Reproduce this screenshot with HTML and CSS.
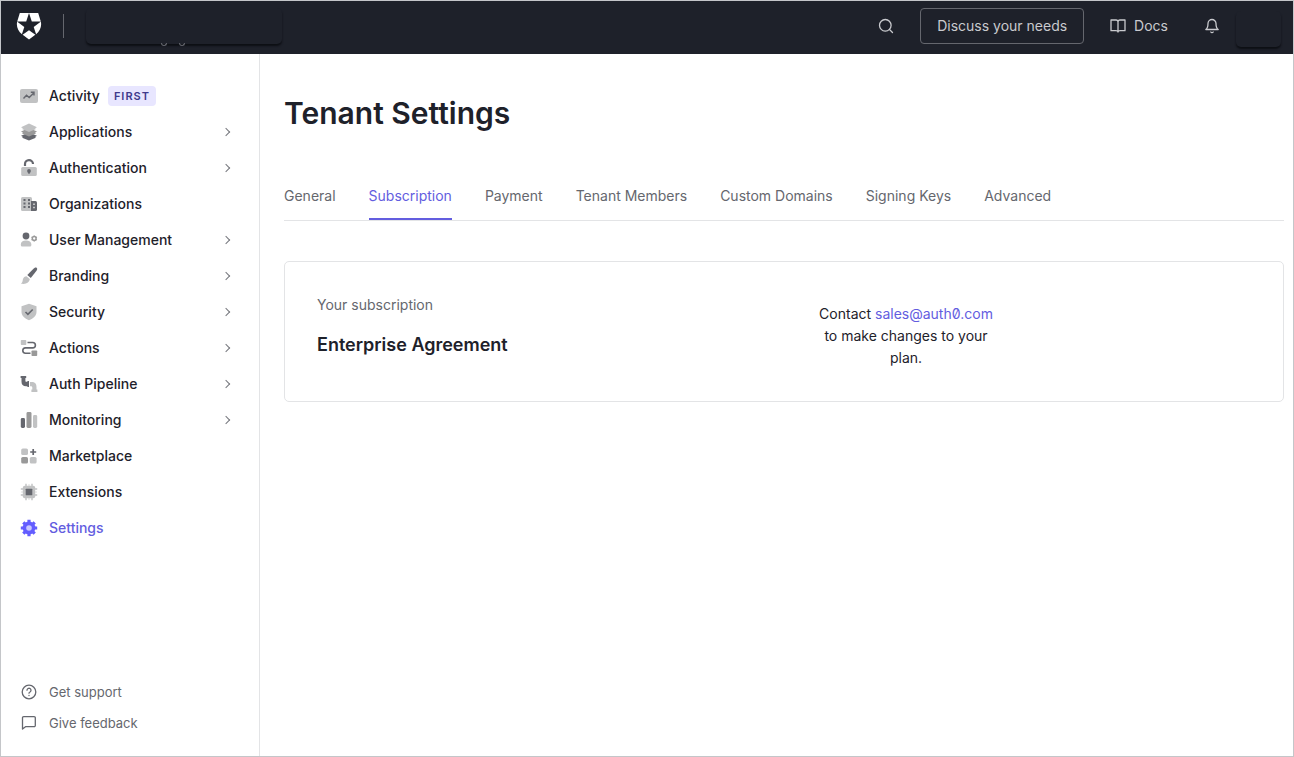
FILE: index.html
```html
<!DOCTYPE html>
<html lang="en">
<head>
<meta charset="utf-8">
<meta name="viewport" content="width=device-width, initial-scale=1">
<title>Tenant Settings</title>
<link rel="stylesheet" href="styles.css">
</head>
<body>
<div class="app">
  <header class="topbar">
    <a class="logo" href="#" aria-label="Home">
      <svg width="26" height="28" viewBox="0 0 26 28"><path fill="#fff" d="M3.8 1h18.4l2.5 8.2c1.4 4.800-.6 10.200-4.700 13L13 27.500l-7-5.300C1.900 19.400-.1 14 1.300 9.200z"/><path fill="#1e212a" d="M13 1l2.800 8.500h9.200l-7.300 5.400 2.800 8.600L13 18.200l-7.500 5.300 2.800-8.600L1 9.500h9.200z"/></svg>
    </a>
    <span class="divider"></span>
    <button class="tenant" type="button" aria-label="Switch tenant"><span class="hook"></span><span class="hook"></span></button>
    <div class="actions">
      <button class="icon-btn" type="button" aria-label="Search"><svg class="line" width="16" height="16" viewBox="0 0 16 16"><circle cx="7.300" cy="7.300" r="5.800"/><path d="M11.500 11.500l3 3"/></svg></button>
      <button class="discuss" type="button">Discuss your needs</button>
      <a class="docs" href="#"><svg class="line" width="16" height="16" viewBox="0 0 16 16"><path d="M8 4v10M8 4c0-1.200-.8-2-2-2H1v10.700h5c1.200 0 2 .4 2 1.300 0-.9.800-1.300 2-1.300h5V2h-5c-1.200 0-2 .8-2 2z"/></svg>Docs</a>
      <button class="icon-btn" type="button" aria-label="Notifications"><svg class="line" width="16" height="16" viewBox="0 0 16 16"><path d="M12 5.500a4 4 0 0 0-8 0c0 4.500-2.200 6-2.200 6h12.400S12 10 12 5.500M9.200 14a1.400 1.400 0 0 1-2.400 0"/></svg></button>
      <button class="account" type="button" aria-label="Account"></button>
    </div>
  </header>
  <div class="body">
    <aside class="sidebar">
      <nav class="nav">
        <a class="item" href="#"><svg width="18" height="18" viewBox="0 0 18 18"><rect y="2" width="18" height="14" rx="2" fill="#c1c2c3"/><path d="M3.500 11.500l3-3.300 2.700 2.400 4.800-4.800M10.800 5.300H14v3.200" fill="none" stroke="#65676e" stroke-width="1.400"/></svg><span>Activity</span><span class="badge">FIRST</span></a>
        <a class="item" href="#"><svg width="18" height="18" viewBox="0 0 18 18"><path d="M9 9.500l8 3.300-2 1.200.9.700L9 17.500l-6.900-2.800.9-.7-2-1.200z" fill="#65676e"/><path d="M9 5l8 3.600-2 1.100 1 .7-7 3.100-7-3.100 1-.7-2-1.100z" fill="#999"/><path d="M9 .6l8 3.600-2 1.100 1 .8-7 3-7-3 1-.8-2-1.100z" fill="#c1c2c3"/></svg><span>Applications</span><i class="chev"></i></a>
        <a class="item" href="#"><svg width="18" height="18" viewBox="0 0 18 18"><path d="M5 7V5.200a4 4 0 0 1 8-.2" fill="none" stroke="#65676e" stroke-width="2.200"/><rect x="1.200" y="8" width="15.600" height="9" rx="1.500" fill="#c1c2c3"/><circle cx="9" cy="12" r="1.900" fill="#65676e"/><path d="M9 12v2.700" stroke="#65676e" stroke-width="1.500"/></svg><span>Authentication</span><i class="chev"></i></a>
        <a class="item" href="#"><svg width="18" height="18" viewBox="0 0 18 18"><rect x="1" y="2" width="11" height="14" rx="1.500" fill="#c1c2c3"/><path d="M3.500 5h2M8 5h2M3.500 8.500h2M8 8.500h2M3.500 12h2M8 12h2" stroke="#65676e" stroke-width="1.800"/><path d="M11 6h4.500A1.500 1.500 0 0 1 17 7.500v7a1.500 1.500 0 0 1-1.500 1.500H11z" fill="#65676e"/><path d="M13 9.200h2M13 12.500h2" stroke="#c1c2c3" stroke-width="1.500"/></svg><span>Organizations</span></a>
        <a class="item" href="#"><svg width="18" height="18" viewBox="0 0 18 18"><circle cx="6" cy="5" r="3.400" fill="#65676e"/><path d="M.8 13.500C.8 11 2.800 9.600 6 9.600s5.400 1.400 5.400 3.900c0 1.600-.6 2-1.400 2H2.200c-.8 0-1.400-.4-1.400-2z" fill="#c1c2c3"/><circle cx="14.200" cy="7.500" r="1.900" fill="none" stroke="#999" stroke-width="1.500"/><path d="M14.200 4.400v1M14.200 9.600v1M11.500 5.900l.9.500M16 8.600l.9.500M11.500 9.100l.9-.5M16 6.400l.9-.5" stroke="#999" stroke-width="1.200"/></svg><span>User Management</span><i class="chev"></i></a>
        <a class="item" href="#"><svg width="18" height="18" viewBox="0 0 18 18"><path d="M16.600.8c1 .8.700 1.800-.3 3.200L10.800 11 7.300 8.100 13 2.200C14.500.7 15.700.1 16.600.8z" fill="#65676e"/><path d="M6.400 9.200l3.400 2.900c-.3 3.200-3.700 5.700-9 4.500 2-1 1.600-2.200 2.100-4.300.5-1.900 2-3 3.500-3.100z" fill="#c1c2c3"/></svg><span>Branding</span><i class="chev"></i></a>
        <a class="item" href="#"><svg width="18" height="18" viewBox="0 0 18 18"><path d="M9 .8l7.500 2.500v5.500c0 4-3 6.800-7.500 8.500-4.500-1.700-7.500-4.500-7.500-8.500V3.300z" fill="#c1c2c3"/><path d="M5.500 9l2.400 2.400L12.700 6.500" fill="none" stroke="#65676e" stroke-width="1.600"/></svg><span>Security</span><i class="chev"></i></a>
        <a class="item" href="#"><svg width="18" height="18" viewBox="0 0 18 18"><rect x=".8" y="1" width="5.500" height="5" rx=".8" fill="#c1c2c3"/><path d="M7.500 3.500h5.200a2.700 2.700 0 0 1 0 5.400H5.500a2.700 2.700 0 0 0 0 5.400h5" fill="none" stroke="#65676e" stroke-width="1.600"/><rect x="11.500" y="11.500" width="5.700" height="5.500" rx=".8" fill="#999"/></svg><span>Actions</span><i class="chev"></i></a>
        <a class="item" href="#"><svg width="18" height="18" viewBox="0 0 18 18"><path d="M.6 1h5.600v2h-.8v2.700c0 .8.300 1.100 1 1.100h1V6h1.600v6H7.400v-.8H6c-3 0-4.500-1.600-4.500-4.500V3H.6z" fill="#65676e"/><path d="M10 7h1.500c3.500 0 5 1.800 5 5v2.500h.9V17h-6v-2.500h.9v-1.700c0-1-.4-1.500-1.300-1.500h-1z" fill="#c1c2c3"/></svg><span>Auth Pipeline</span><i class="chev"></i></a>
        <a class="item" href="#"><svg width="18" height="18" viewBox="0 0 18 18"><rect x=".8" y="7" width="4.200" height="10" rx="1.400" fill="#65676e"/><rect x="6.500" y="1" width="5" height="16" rx="1.400" fill="#999"/><rect x="13" y="4" width="4.200" height="13" rx="1.400" fill="#c1c2c3"/></svg><span>Monitoring</span><i class="chev"></i></a>
        <a class="item" href="#"><svg width="18" height="18" viewBox="0 0 18 18"><rect x="1.200" y="1.500" width="6.800" height="6.500" rx="1.600" fill="#c1c2c3"/><rect x="1.200" y="10" width="6.800" height="6.500" rx="1.600" fill="#999"/><rect x="9.800" y="10" width="6.800" height="6.500" rx="1.600" fill="#c1c2c3"/><path d="M13.200 2v6M10.200 5h6" stroke="#65676e" stroke-width="1.700"/></svg><span>Marketplace</span></a>
        <a class="item" href="#"><svg width="18" height="18" viewBox="0 0 18 18"><path d="M6 .8v16.400M12 .8v16.400M.8 6h16.400M.8 12h16.400" stroke="#c1c2c3" stroke-width="1.400"/><path d="M9 1v16M1 9h16" stroke="#dcdddd" stroke-width="1"/><rect x="2.800" y="2.800" width="12.400" height="12.400" rx="2" fill="#c1c2c3"/><rect x="5.700" y="5.700" width="6.600" height="6.600" rx=".6" fill="#65676e"/></svg><span>Extensions</span></a>
        <a class="item current" href="#" aria-current="page"><svg width="18" height="18" viewBox="0 0 18 18"><circle cx="9" cy="9" r="6.400" fill="#635dff"/><path d="M9 .8v16.400M.8 9h16.400M3.300 3.300l11.400 11.400M3.300 14.700L14.700 3.300" stroke="#635dff" stroke-width="3.200"/><circle cx="9" cy="9" r="2.800" fill="#c8c6ff"/></svg><span>Settings</span></a>
      </nav>
      <div class="help">
        <a class="help-link" href="#"><svg class="line" width="16" height="16" viewBox="0 0 16 16"><circle cx="8" cy="8" r="6.800"/><path d="M6 6.200a2 2 0 1 1 3 1.800c-.7.300-1 .6-1 1.200M8 11.400v.2"/></svg>Get support</a>
        <a class="help-link" href="#"><svg class="line" width="16" height="16" viewBox="0 0 16 16"><path d="M14.300 2.800v7.700a1.200 1.200 0 0 1-1.200 1.200H4.500L1.500 14V2.800a1.200 1.200 0 0 1 1.200-1.200h10.400a1.200 1.200 0 0 1 1.200 1.200z"/></svg>Give feedback</a>
      </div>
    </aside>
    <main class="main">
      <h1 class="title">Tenant Settings</h1>
      <nav class="tabs">
        <a class="tab" href="#">General</a>
        <a class="tab active" href="#" aria-current="page">Subscription</a>
        <a class="tab" href="#">Payment</a>
        <a class="tab" href="#">Tenant Members</a>
        <a class="tab" href="#">Custom Domains</a>
        <a class="tab" href="#">Signing Keys</a>
        <a class="tab" href="#">Advanced</a>
      </nav>
      <section class="card">
        <div class="plan">
          <p class="label">Your subscription</p>
          <h2 class="plan-name">Enterprise Agreement</h2>
        </div>
        <p class="contact">Contact <a href="mailto:sales@auth0.com">sales@auth0.com</a> to make changes to your plan.</p>
      </section>
    </main>
  </div>
</div>
</body>
</html>
```
FILE: styles.css
```css
* { box-sizing: border-box; }
body {
  margin: 0;
  font: 14px/22px Inter, sans-serif;
  color: #1e212a;
  background: #fff;
}
a { color: inherit; text-decoration: none; }
button { font: inherit; color: inherit; background: none; border: 0; padding: 0; }
h1, h2, p { margin: 0; }
svg { display: block; flex: none; }
.line { fill: none; stroke: currentColor; stroke-width: 1.3; stroke-linecap: round; stroke-linejoin: round; }
.app {
  min-height: 100vh;
  display: flex;
  flex-direction: column;
  border: 1px solid #c4c6c9;
}
.topbar {
  height: 53px;
  display: flex;
  align-items: center;
  padding: 0 12px 3px 15px;
  background: #1e212a;
  color: #c9cace;
}
.divider { width: 1px; height: 24px; margin: 0 22px 0 21px; background: #65676e; }
.tenant {
  position: relative;
  width: 196px;
  height: 36px;
  border-radius: 5px;
  box-shadow: 0 2px 2px #0d0f14;
}
.hook {
  position: absolute;
  bottom: -2px;
  left: 75px;
  width: 6px;
  height: 3px;
  border: solid #65676e;
  border-width: 0 1px 1px;
  border-radius: 0 0 4px 4px;
}
.hook + .hook { left: 93px; }
.actions { display: flex; align-items: center; margin-left: auto; }
.discuss {
  height: 36px;
  margin: 0 26px;
  padding: 0 16px;
  border: 1px solid #65676e;
  border-radius: 4px;
}
.docs { display: flex; align-items: center; gap: 8px; margin-right: 36px; }
.account {
  width: 45px;
  height: 36px;
  margin: 6px 0 0 16px;
  border-radius: 5px;
  box-shadow: 0 2px 2px #0d0f14;
}
.body { flex: 1; display: flex; }
.sidebar {
  width: 259px;
  flex: none;
  display: flex;
  flex-direction: column;
  justify-content: space-between;
  padding: 24px 24px 18px 19px;
  border-right: 1px solid #e3e4e6;
}
.item { display: flex; align-items: center; height: 36px; font-weight: 500; }
.item svg { margin-right: 11px; }
.current { color: #635ddf; }
.badge {
  margin-left: 8px;
  padding: 0 6px;
  border-radius: 4px;
  background: #e8e6ff;
  color: #3f3a8c;
  font-size: 11px;
  font-weight: 600;
  line-height: 20px;
  letter-spacing: 1px;
}
.chev {
  width: 6px;
  height: 6px;
  margin: 0 6px 0 auto;
  border: solid #75777d;
  border-width: 1px 1px 0 0;
  transform: rotate(45deg);
}
.help { color: #65676e; font-size: 13px; }
.help-link { display: flex; align-items: center; gap: 12px; height: 31px; padding-left: 1px; }
.main { flex: 1; min-width: 0; padding: 39px 9px 40px 24px; }
.title { font-size: 30px; line-height: 40px; font-weight: 600; }
.tabs {
  display: flex;
  gap: 33px;
  margin-top: 40px;
  border-bottom: 1px solid #e3e4e6;
  color: #65676e;
}
.tab { padding: 12px 0 11px; border-bottom: 2px solid transparent; white-space: nowrap; }
.active { color: #635ddf; border-color: #635ddf; }
.card {
  display: grid;
  grid-template-columns: 1fr 1fr;
  align-items: center;
  margin-top: 40px;
  padding: 32px;
  border: 1px solid #e3e4e6;
  border-radius: 5px;
}
.plan { align-self: start; }
.label { color: #65676e; }
.plan-name { margin-top: 15px; font-size: 18px; line-height: 28px; font-weight: 600; }
.contact {
  width: 180px;
  margin: 9px 0 0 32px;
  text-align: center;
  font-variant-numeric: slashed-zero;
}
.contact a { color: #635ddf; }
```
